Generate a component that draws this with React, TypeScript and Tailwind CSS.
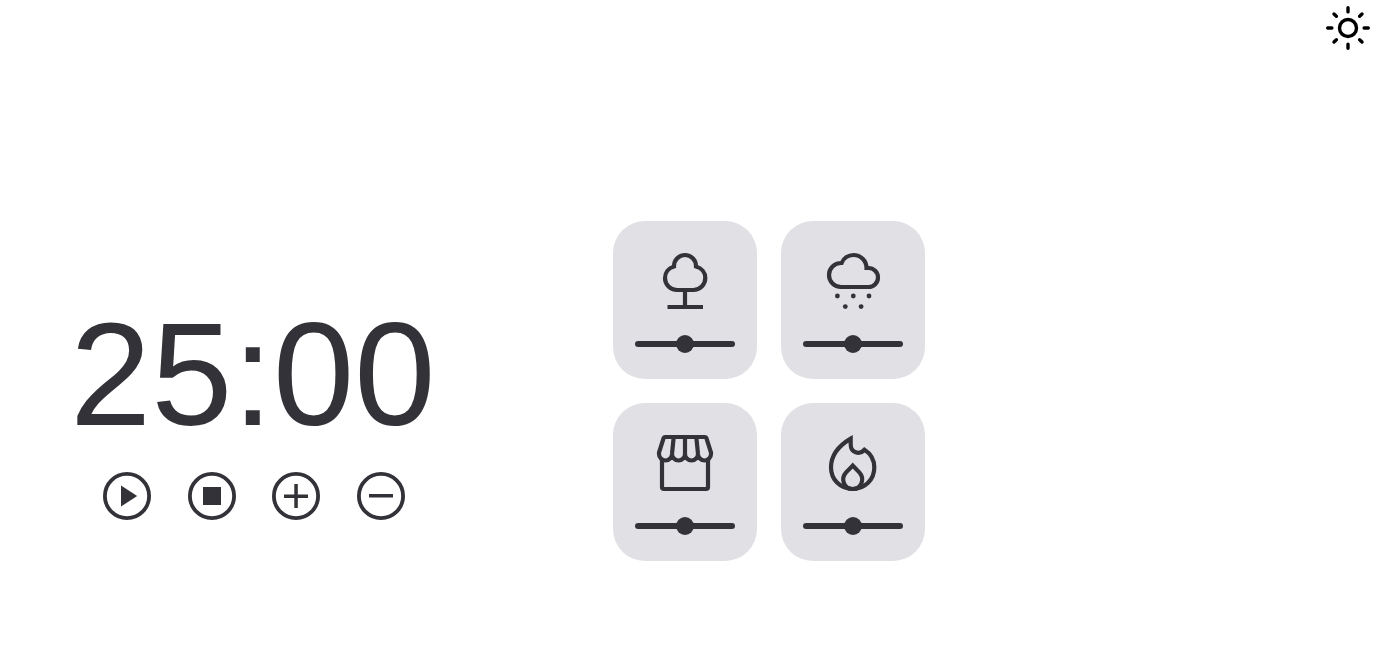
import { useEffect, useState, type ReactNode } from "react";

const START_SECONDS = 25 * 60;
const STEP_SECONDS = 5 * 60;

function SunIcon() {
  return (
    <svg viewBox="0 0 50 50" className="size-[50px]" fill="none" stroke="currentColor" strokeWidth="3.4" strokeLinecap="round" aria-hidden="true">
      <path d="M25 4.700v4.200M25 41.100v4.200M45.300 25h-4.200M8.900 25H4.700M39 11l-2.400 2.300M13.400 36.700L11 39M39 39l-2.400-2.300M13.400 13.300L11 11" />
      <circle cx="25" cy="25" r="8.500" />
    </svg>
  );
}

function TreeIcon() {
  return (
    <>
      <path d="M20 37A12 12 0 0 1 8 25C8 19.500 11.600 15 17 13.500V13a11 11 0 0 1 22 0v.5C44.600 15 48.300 19.500 48.300 25A12 12 0 0 1 36.300 37z" />
      <path d="M28 37v17M10.500 54h35.500" />
    </>
  );
}

function RainIcon() {
  return (
    <>
      <path d="M16 34h27.500a9.500 9.500 0 0 0 0-19h-2A13 13 0 0 0 28.500 2C23.200 2 18.500 5.200 16.600 10H16a12 12 0 0 0 0 24z" />
      <g fill="currentColor" stroke="none">
        <circle cx="12.4" cy="43" r="2.4" />
        <circle cx="28.3" cy="43" r="2.4" />
        <circle cx="44" cy="43" r="2.4" />
        <circle cx="20.3" cy="53.6" r="2.4" />
        <circle cx="36.1" cy="53.6" r="2.4" />
      </g>
    </>
  );
}

function StoreIcon() {
  return (
    <>
      <path d="M5 24v28a2 2 0 0 0 2 2h42a2 2 0 0 0 2-2V24" />
      <path d="M8.400 2h39.200a2 2 0 0 1 1.900 1.500L54 17.500v1.500a6.500 6.500 0 0 1-13 0a6.500 6.500 0 0 1-13 0a6.500 6.500 0 0 1-13 0a6.500 6.500 0 0 1-13 0v-1.500L6.500 3.500A2 2 0 0 1 8.400 2z" />
      <path d="M16.700 2L15 19M28 2v17M39.300 2L41 19" />
    </>
  );
}

function FlameIcon() {
  return (
    <>
      <path d="M25.700 3.600C14 10.500 6 20.500 6 32.500C6 44.800 15.500 54 27.700 54S49.300 44.800 49.300 32.500C49.300 25 45.500 18.500 39.500 14.700C34.500 20.500 25.700 17.500 25.700 9.500z" />
      <path d="M27.700 30.600l-6.600 6.800C15.500 43.500 18.500 54 27.700 54s12.200-10.500 6.600-16.600z" />
    </>
  );
}

type Sound = { id: string; label: string; icon: ReactNode };

const sounds: Sound[] = [
  { id: "forest", label: "Forest", icon: <TreeIcon /> },
  { id: "rain", label: "Rain", icon: <RainIcon /> },
  { id: "market", label: "Coffee shop", icon: <StoreIcon /> },
  { id: "fire", label: "Fireplace", icon: <FlameIcon /> },
];

function SoundCard({ sound }: { sound: Sound }) {
  return (
    <div className="flex w-36 flex-col items-center rounded-[32px] bg-[#e1e0e5] px-[22px] pt-8 pb-[26px]">
      <button type="button" aria-label={sound.label}>
        <svg viewBox="0 0 56 56" className="size-14 overflow-visible" fill="none" stroke="currentColor" strokeWidth="4.200" aria-hidden="true">
          {sound.icon}
        </svg>
      </button>
      <input
        type="range"
        min="0"
        max="100"
        defaultValue="50"
        aria-label={`${sound.label} volume`}
        className="mt-[26px] block h-[18px] w-full cursor-pointer appearance-none bg-transparent [&::-webkit-slider-runnable-track]:h-[6px] [&::-webkit-slider-runnable-track]:rounded-full [&::-webkit-slider-runnable-track]:bg-[#323238] [&::-webkit-slider-thumb]:-mt-[6px] [&::-webkit-slider-thumb]:size-[18px] [&::-webkit-slider-thumb]:appearance-none [&::-webkit-slider-thumb]:rounded-full [&::-webkit-slider-thumb]:bg-[#323238]"
      />
    </div>
  );
}

function ControlButton({ label, onClick, children }: { label: string; onClick: () => void; children: ReactNode }) {
  return (
    <button type="button" aria-label={label} onClick={onClick}>
      <svg viewBox="0 0 48 48" className="size-12" fill="currentColor" aria-hidden="true">
        <circle cx="24" cy="24" r="22.1" fill="none" stroke="currentColor" strokeWidth="3.8" />
        {children}
      </svg>
    </button>
  );
}

export default function App() {
  const [seconds, setSeconds] = useState(START_SECONDS);
  const [running, setRunning] = useState(false);

  useEffect(() => {
    if (!running) return;
    const timer = setInterval(() => setSeconds((s) => Math.max(0, s - 1)), 1000);
    return () => clearInterval(timer);
  }, [running]);

  const minutes = String(Math.floor(seconds / 60)).padStart(2, "0");
  const rest = String(seconds % 60).padStart(2, "0");

  return (
    <div className="min-h-screen bg-white font-['Liberation_Sans',Arial,sans-serif] text-[#323238]">
      <header className="flex justify-end pt-[3px] pr-[25px] text-black">
        <button type="button" aria-label="Toggle theme">
          <SunIcon />
        </button>
      </header>
      <main className="mt-[168px] flex items-start gap-[178px] pl-[70px]">
        <section className="pt-[81px]" aria-label="Timer">
          <div role="timer" className="text-[146px] leading-none">
            {minutes}:{rest}
          </div>
          <div className="mt-6 ml-[33px] flex w-[302px] justify-between">
            <ControlButton label="Start" onClick={() => setRunning(true)}>
              <path d="M18 13.600L34.200 24L18 34.400z" />
            </ControlButton>
            <ControlButton
              label="Stop"
              onClick={() => {
                setRunning(false);
                setSeconds(START_SECONDS);
              }}
            >
              <path d="M15 15h18v18H15z" />
            </ControlButton>
            <ControlButton label="Add five minutes" onClick={() => setSeconds((s) => s + STEP_SECONDS)}>
              <path d="M22.300 12h3.500v10.500H36V26H25.800v10h-3.500V26H12v-3.500h10.300z" />
            </ControlButton>
            <ControlButton label="Remove five minutes" onClick={() => setSeconds((s) => Math.max(0, s - STEP_SECONDS))}>
              <path d="M12 22h24v3.500H12z" />
            </ControlButton>
          </div>
        </section>
        <section className="grid grid-cols-2 gap-6" aria-label="Ambient sounds">
          {sounds.map((sound) => (
            <SoundCard key={sound.id} sound={sound} />
          ))}
        </section>
      </main>
    </div>
  );
}
